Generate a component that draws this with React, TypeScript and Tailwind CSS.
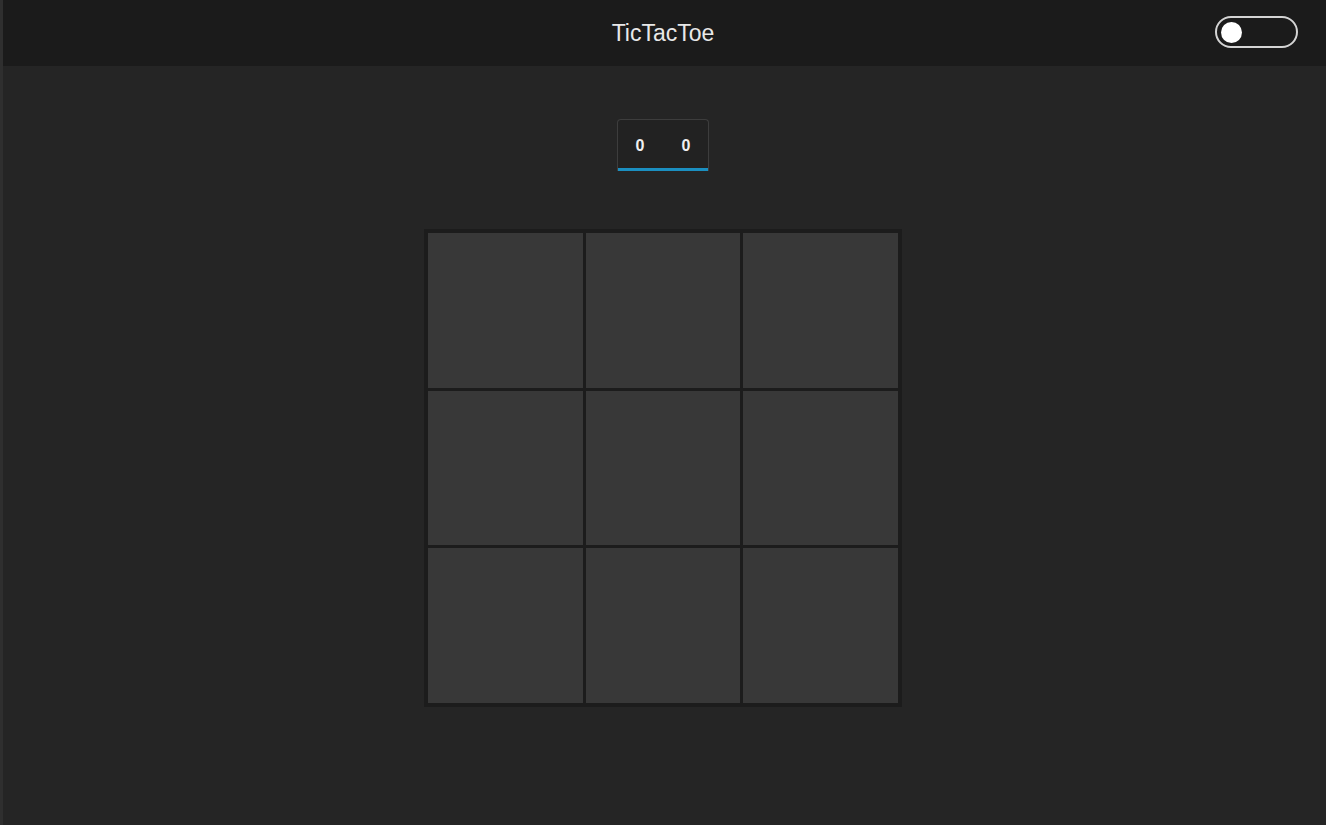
import React, { useState } from 'react';

type Cell = 'X' | 'O' | null;

const Header: React.FC<{ on: boolean; onToggle: () => void }> = ({ on, onToggle }) => (
  <header className="relative flex h-[66px] items-center justify-center bg-[#1b1b1b] shadow-[inset_3px_0_0_#2f2f2f]">
    <h1 className="text-[23px] font-normal text-[#e8e8e8]">TicTacToe</h1>
    {/* theme switch */}
    <button
      onClick={onToggle}
      className="absolute right-[28px] top-[16px] flex h-[32px] w-[83px] items-center rounded-full border-2 border-[#d4d4d4] px-[4px]"
    >
      <span className={`h-[21px] w-[21px] rounded-full bg-white ${on ? 'ml-auto' : ''}`} />
    </button>
  </header>
);

const Score: React.FC<{ x: number; o: number }> = ({ x, o }) => (
  <div className="flex h-[52px] w-[92px] flex-col rounded-t-[4px] border border-b-0 border-[#3d3d3d] bg-[#222222]">
    <div className="flex flex-1 items-center justify-center gap-[37px] pt-[3px] text-[16px] font-bold text-[#f0f0f0]">
      <span>{x}</span>
      <span>{o}</span>
    </div>
    <div className="h-[3px] bg-[#1b8fc0]" />
  </div>
);

export default function App() {
  const [dark, setDark] = useState(false);
  const [cells, setCells] = useState<Cell[]>(Array(9).fill(null));
  const [turn, setTurn] = useState<'X' | 'O'>('X');

  const play = (i: number) => {
    if (cells[i]) return;
    const next = [...cells];
    next[i] = turn;
    setCells(next);
    setTurn(turn === 'X' ? 'O' : 'X');
  };

  return (
    <div
      className="flex min-h-[825px] flex-col bg-[#252525] shadow-[inset_3px_0_0_#2f2f2f]"
      style={{ fontFamily: '"Liberation Sans", Arial, sans-serif' }}
    >
      <Header on={dark} onToggle={() => setDark(!dark)} />
      <main className="flex flex-col items-center pt-[53px]">
        <Score x={0} o={0} />
        <div className="mt-[58px] grid h-[478px] w-[478px] grid-cols-3 grid-rows-3 gap-[3px] bg-[#1c1c1c] p-[4px]">
          {cells.map((c, i) => (
            <button
              key={i}
              onClick={() => play(i)}
              className="flex items-center justify-center bg-[#383838] text-[64px] font-bold text-[#e6e6e6]"
            >
              {c}
            </button>
          ))}
        </div>
      </main>
    </div>
  );
}
